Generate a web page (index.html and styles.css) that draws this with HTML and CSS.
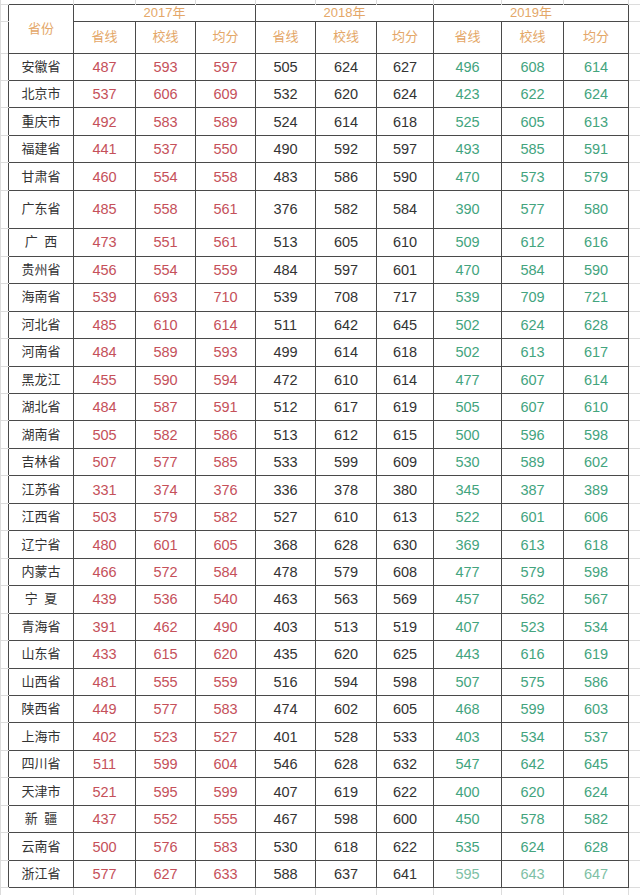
FILE: index.html
```html
<!DOCTYPE html>
<html lang="zh-CN">
<head>
<meta charset="utf-8">
<title>2017-2019 分数线</title>
<link rel="stylesheet" href="styles.css">
</head>
<body>
<table class="sheet">
<colgroup>
<col class="c-gl"><col class="c-prov"><col class="c-62"><col class="c-60"><col class="c-60"><col class="c-60"><col class="c-61"><col class="c-57"><col class="c-68"><col class="c-62"><col class="c-65"><col class="c-gr">
</colgroup>
<tr class="g-top"><td class="gl"></td><td class="gt"></td><td class="gt"></td><td class="gt"></td><td class="gt"></td><td class="gt"></td><td class="gt"></td><td class="gt"></td><td class="gt"></td><td class="gt"></td><td class="gt"></td><td class="gr"></td></tr>
<tr class="h1"><td class="gl"></td><th class="hd" rowspan="2">省份</th><th class="hd yr" colspan="3">2017年</th><th class="hd yr" colspan="3">2018年</th><th class="hd yr" colspan="3">2019年</th><td class="gr"></td></tr>
<tr class="h2"><td class="gl"></td><th class="hd">省线</th><th class="hd">校线</th><th class="hd">均分</th><th class="hd">省线</th><th class="hd">校线</th><th class="hd">均分</th><th class="hd">省线</th><th class="hd">校线</th><th class="hd">均分</th><td class="gr"></td></tr>
<tr class="row"><td class="gl"></td><td class="p">安徽省</td><td class="r">487</td><td class="r">593</td><td class="r">597</td><td class="k">505</td><td class="k">624</td><td class="k">627</td><td class="g">496</td><td class="g">608</td><td class="g">614</td><td class="gr"></td></tr>
<tr class="row"><td class="gl"></td><td class="p">北京市</td><td class="r">537</td><td class="r">606</td><td class="r">609</td><td class="k">532</td><td class="k">620</td><td class="k">624</td><td class="g">423</td><td class="g">622</td><td class="g">624</td><td class="gr"></td></tr>
<tr class="row"><td class="gl"></td><td class="p">重庆市</td><td class="r">492</td><td class="r">583</td><td class="r">589</td><td class="k">524</td><td class="k">614</td><td class="k">618</td><td class="g">525</td><td class="g">605</td><td class="g">613</td><td class="gr"></td></tr>
<tr class="row"><td class="gl"></td><td class="p">福建省</td><td class="r">441</td><td class="r">537</td><td class="r">550</td><td class="k">490</td><td class="k">592</td><td class="k">597</td><td class="g">493</td><td class="g">585</td><td class="g">591</td><td class="gr"></td></tr>
<tr class="row"><td class="gl"></td><td class="p">甘肃省</td><td class="r">460</td><td class="r">554</td><td class="r">558</td><td class="k">483</td><td class="k">586</td><td class="k">590</td><td class="g">470</td><td class="g">573</td><td class="g">579</td><td class="gr"></td></tr>
<tr class="row tall"><td class="gl"></td><td class="p">广东省</td><td class="r">485</td><td class="r">558</td><td class="r">561</td><td class="k">376</td><td class="k">582</td><td class="k">584</td><td class="g">390</td><td class="g">577</td><td class="g">580</td><td class="gr"></td></tr>
<tr class="row r28"><td class="gl"></td><td class="p">广&ensp;西</td><td class="r">473</td><td class="r">551</td><td class="r">561</td><td class="k">513</td><td class="k">605</td><td class="k">610</td><td class="g">509</td><td class="g">612</td><td class="g">616</td><td class="gr"></td></tr>
<tr class="row"><td class="gl"></td><td class="p">贵州省</td><td class="r">456</td><td class="r">554</td><td class="r">559</td><td class="k">484</td><td class="k">597</td><td class="k">601</td><td class="g">470</td><td class="g">584</td><td class="g">590</td><td class="gr"></td></tr>
<tr class="row"><td class="gl"></td><td class="p">海南省</td><td class="r">539</td><td class="r">693</td><td class="r">710</td><td class="k">539</td><td class="k">708</td><td class="k">717</td><td class="g">539</td><td class="g">709</td><td class="g">721</td><td class="gr"></td></tr>
<tr class="row"><td class="gl"></td><td class="p">河北省</td><td class="r">485</td><td class="r">610</td><td class="r">614</td><td class="k">511</td><td class="k">642</td><td class="k">645</td><td class="g">502</td><td class="g">624</td><td class="g">628</td><td class="gr"></td></tr>
<tr class="row"><td class="gl"></td><td class="p">河南省</td><td class="r">484</td><td class="r">589</td><td class="r">593</td><td class="k">499</td><td class="k">614</td><td class="k">618</td><td class="g">502</td><td class="g">613</td><td class="g">617</td><td class="gr"></td></tr>
<tr class="row"><td class="gl"></td><td class="p">黑龙江</td><td class="r">455</td><td class="r">590</td><td class="r">594</td><td class="k">472</td><td class="k">610</td><td class="k">614</td><td class="g">477</td><td class="g">607</td><td class="g">614</td><td class="gr"></td></tr>
<tr class="row"><td class="gl"></td><td class="p">湖北省</td><td class="r">484</td><td class="r">587</td><td class="r">591</td><td class="k">512</td><td class="k">617</td><td class="k">619</td><td class="g">505</td><td class="g">607</td><td class="g">610</td><td class="gr"></td></tr>
<tr class="row"><td class="gl"></td><td class="p">湖南省</td><td class="r">505</td><td class="r">582</td><td class="r">586</td><td class="k">513</td><td class="k">612</td><td class="k">615</td><td class="g">500</td><td class="g">596</td><td class="g">598</td><td class="gr"></td></tr>
<tr class="row"><td class="gl"></td><td class="p">吉林省</td><td class="r">507</td><td class="r">577</td><td class="r">585</td><td class="k">533</td><td class="k">599</td><td class="k">609</td><td class="g">530</td><td class="g">589</td><td class="g">602</td><td class="gr"></td></tr>
<tr class="row"><td class="gl"></td><td class="p">江苏省</td><td class="r">331</td><td class="r">374</td><td class="r">376</td><td class="k">336</td><td class="k">378</td><td class="k">380</td><td class="g">345</td><td class="g">387</td><td class="g">389</td><td class="gr"></td></tr>
<tr class="row"><td class="gl"></td><td class="p">江西省</td><td class="r">503</td><td class="r">579</td><td class="r">582</td><td class="k">527</td><td class="k">610</td><td class="k">613</td><td class="g">522</td><td class="g">601</td><td class="g">606</td><td class="gr"></td></tr>
<tr class="row"><td class="gl"></td><td class="p">辽宁省</td><td class="r">480</td><td class="r">601</td><td class="r">605</td><td class="k">368</td><td class="k">628</td><td class="k">630</td><td class="g">369</td><td class="g">613</td><td class="g">618</td><td class="gr"></td></tr>
<tr class="row"><td class="gl"></td><td class="p">内蒙古</td><td class="r">466</td><td class="r">572</td><td class="r">584</td><td class="k">478</td><td class="k">579</td><td class="k">608</td><td class="g">477</td><td class="g">579</td><td class="g">598</td><td class="gr"></td></tr>
<tr class="row"><td class="gl"></td><td class="p">宁&ensp;夏</td><td class="r">439</td><td class="r">536</td><td class="r">540</td><td class="k">463</td><td class="k">563</td><td class="k">569</td><td class="g">457</td><td class="g">562</td><td class="g">567</td><td class="gr"></td></tr>
<tr class="row"><td class="gl"></td><td class="p">青海省</td><td class="r">391</td><td class="r">462</td><td class="r">490</td><td class="k">403</td><td class="k">513</td><td class="k">519</td><td class="g">407</td><td class="g">523</td><td class="g">534</td><td class="gr"></td></tr>
<tr class="row"><td class="gl"></td><td class="p">山东省</td><td class="r">433</td><td class="r">615</td><td class="r">620</td><td class="k">435</td><td class="k">620</td><td class="k">625</td><td class="g">443</td><td class="g">616</td><td class="g">619</td><td class="gr"></td></tr>
<tr class="row"><td class="gl"></td><td class="p">山西省</td><td class="r">481</td><td class="r">555</td><td class="r">559</td><td class="k">516</td><td class="k">594</td><td class="k">598</td><td class="g">507</td><td class="g">575</td><td class="g">586</td><td class="gr"></td></tr>
<tr class="row"><td class="gl"></td><td class="p">陕西省</td><td class="r">449</td><td class="r">577</td><td class="r">583</td><td class="k">474</td><td class="k">602</td><td class="k">605</td><td class="g">468</td><td class="g">599</td><td class="g">603</td><td class="gr"></td></tr>
<tr class="row"><td class="gl"></td><td class="p">上海市</td><td class="r">402</td><td class="r">523</td><td class="r">527</td><td class="k">401</td><td class="k">528</td><td class="k">533</td><td class="g">403</td><td class="g">534</td><td class="g">537</td><td class="gr"></td></tr>
<tr class="row"><td class="gl"></td><td class="p">四川省</td><td class="r">511</td><td class="r">599</td><td class="r">604</td><td class="k">546</td><td class="k">628</td><td class="k">632</td><td class="g">547</td><td class="g">642</td><td class="g">645</td><td class="gr"></td></tr>
<tr class="row"><td class="gl"></td><td class="p">天津市</td><td class="r">521</td><td class="r">595</td><td class="r">599</td><td class="k">407</td><td class="k">619</td><td class="k">622</td><td class="g">400</td><td class="g">620</td><td class="g">624</td><td class="gr"></td></tr>
<tr class="row"><td class="gl"></td><td class="p">新&ensp;疆</td><td class="r">437</td><td class="r">552</td><td class="r">555</td><td class="k">467</td><td class="k">598</td><td class="k">600</td><td class="g">450</td><td class="g">578</td><td class="g">582</td><td class="gr"></td></tr>
<tr class="row"><td class="gl"></td><td class="p">云南省</td><td class="r">500</td><td class="r">576</td><td class="r">583</td><td class="k">530</td><td class="k">618</td><td class="k">622</td><td class="g">535</td><td class="g">624</td><td class="g">628</td><td class="gr"></td></tr>
<tr class="row"><td class="gl"></td><td class="p">浙江省</td><td class="r">577</td><td class="r">627</td><td class="r">633</td><td class="k">588</td><td class="k">637</td><td class="k">641</td><td class="g faded">595</td><td class="g faded">643</td><td class="g faded">647</td><td class="gr"></td></tr>
<tr class="g-bot"><td class="gl"></td><td class="gt"></td><td class="gt"></td><td class="gt"></td><td class="gt"></td><td class="gt"></td><td class="gt"></td><td class="gt"></td><td class="gt"></td><td class="gt"></td><td class="gt"></td><td class="gr"></td></tr>
</table>
</body>
</html>
```

FILE: styles.css
```css
html, body {
  margin: 0;
  padding: 0;
  background: #ffffff;
}

body {
  width: 640px;
  height: 895px;
  overflow: hidden;
  font-family: "Liberation Sans", "Noto Sans CJK SC", sans-serif;
}

.sheet {
  width: 640px;
  table-layout: fixed;
  border-collapse: collapse;
  border-spacing: 0;
}

.c-gl { width: 8px; }
.c-prov { width: 65px; }
.c-62 { width: 62px; }
.c-60 { width: 60px; }
.c-61 { width: 61px; }
.c-57 { width: 57px; }
.c-68 { width: 68px; }
.c-65 { width: 65px; }
.c-gr { width: 12px; }

.sheet td,
.sheet th {
  padding: 0;
  text-align: center;
  vertical-align: middle;
  font-weight: normal;
  white-space: nowrap;
  overflow: hidden;
  border: 1px solid #4a4a4a;
}

/* spreadsheet gridlines outside the bordered table */
.sheet td.gl {
  border: none;
  border-left: 1px solid #dcdcdc;
  border-bottom: 1px solid #dcdcdc;
}
.sheet td.gr {
  border: none;
  border-bottom: 1px solid #dcdcdc;
}
.sheet td.gt {
  border: none;
  border-right: 1px solid #dcdcdc;
}

.g-top { height: 4px; }
.g-bot { height: 9px; }
.h1 { height: 17.5px; }
.h2 { height: 31.5px; }
.row { height: 27.46px; }
.row.tall { height: 38px; }
.row.r28 { height: 28px; }

.hd {
  color: #e4a768;
  font-size: 13px;
  line-height: 14px;
}

.hd.yr {
  padding-top: 1px;
}

.p {
  color: #333333;
  font-size: 13px;
  line-height: 16px;
}

.r, .k, .g {
  font-size: 14.5px;
  line-height: 16px;
}

.r { color: #c5505a; }
.k { color: #333333; }
.g { color: #43a47e; }
.g.faded { color: #7ebfa5; }
```
